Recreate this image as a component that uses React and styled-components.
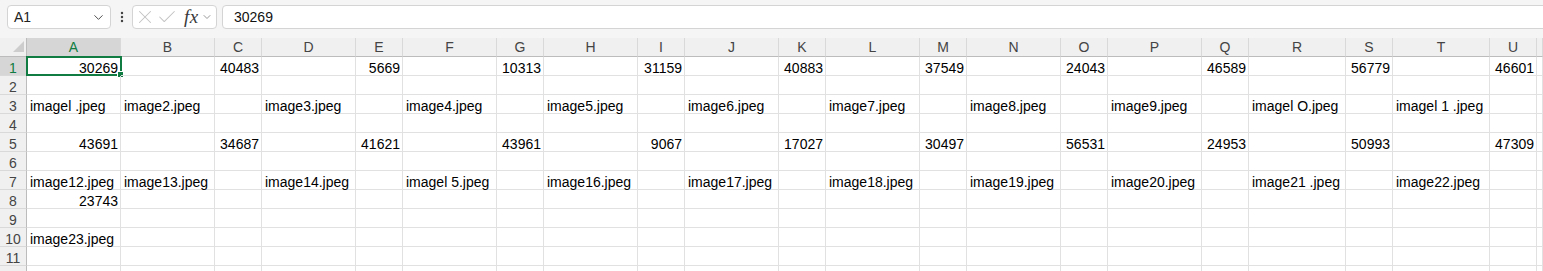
import React from "react";
import styled, { createGlobalStyle } from "styled-components";
import { ChevronDown, X, Check, EllipsisVertical } from "lucide-react";

const GlobalStyle = createGlobalStyle`
  html, body {
    margin: 0;
    padding: 0;
    background: #ffffff;
    overflow: hidden;
  }
  body {
    font-family: "Liberation Sans", Arial, sans-serif;
  }
`;

const COLS = [
  ["A", 94], ["B", 94], ["C", 47], ["D", 94], ["E", 47], ["F", 94], ["G", 47],
  ["H", 94], ["I", 47], ["J", 94], ["K", 47], ["L", 94], ["M", 47], ["N", 94],
  ["O", 47], ["P", 94], ["Q", 47], ["R", 97], ["S", 47], ["T", 97], ["U", 47],
];

const ROW_COUNT = 12;

const DATA = {
  1: { A: "30269", C: "40483", E: "5669", G: "10313", I: "31159", K: "40883", M: "37549", O: "24043", Q: "46589", S: "56779", U: "46601" },
  3: { A: "imagel .jpeg", B: "image2.jpeg", D: "image3.jpeg", F: "image4.jpeg", H: "image5.jpeg", J: "image6.jpeg", L: "image7.jpeg", N: "image8.jpeg", P: "image9.jpeg", R: "imagel O.jpeg", T: "imagel 1 .jpeg" },
  5: { A: "43691", C: "34687", E: "41621", G: "43961", I: "9067", K: "17027", M: "30497", O: "56531", Q: "24953", S: "50993", U: "47309" },
  7: { A: "image12.jpeg", B: "image13.jpeg", D: "image14.jpeg", F: "imagel 5.jpeg", H: "image16.jpeg", J: "image17.jpeg", L: "image18.jpeg", N: "image19.jpeg", P: "image20.jpeg", R: "image21 .jpeg", T: "image22.jpeg" },
  8: { A: "23743" },
  10: { A: "image23.jpeg" },
};

const Page = styled.div`
  width: 1543px;
  height: 271px;
  overflow: hidden;
  background: #ffffff;
`;

const FormulaBar = styled.div`
  display: flex;
  align-items: center;
  height: 38px;
  box-sizing: border-box;
  padding: 5px 0 9px 7px;
  background: #f5f5f5;
`;

const Box = styled.div`
  display: flex;
  align-items: center;
  height: 24px;
  box-sizing: border-box;
  background: #ffffff;
  border: 1px solid #d4d4d4;
  border-radius: 4px;
`;

const NameBox = styled(Box)`
  width: 104px;
  padding: 0 4px 0 6px;
  justify-content: space-between;
  font-size: 14px;
  color: #222;
`;

const Dots = styled.div`
  width: 21px;
  display: flex;
  justify-content: center;
  color: #444;
`;

const FxBox = styled(Box)`
  width: 85px;
  padding-left: 1px;
  color: #c2c2c2;
`;

const Fx = styled.span`
  font-family: "Liberation Serif", "Times New Roman", serif;
  font-style: italic;
  font-size: 19px;
  color: #3a3a3a;
  margin-left: 6px;
  letter-spacing: 0.5px;
`;

const FxChevron = styled.span`
  display: flex;
  color: #777;
  margin-left: 2px;
`;

const Input = styled(Box)`
  flex: 1;
  margin-left: 5px;
  margin-right: -8px;
  padding-left: 11px;
  font-size: 14px;
  color: #111;
`;

const Grid = styled.div`
  display: grid;
  grid-template-columns: 27px ${COLS.map(([, w]) => `${w}px`).join(" ")} 1fr;
  grid-template-rows: 19px repeat(${ROW_COUNT}, 19px);
  font-size: 14px;
`;

const Corner = styled.div`
  background: #f0f0f0;
  border-right: 1px solid #bcbcbc;
  border-bottom: 1px solid #bcbcbc;
  box-sizing: border-box;
  display: flex;
  align-items: flex-end;
  justify-content: flex-end;
  padding: 0 2px 4px 0;
`;

const ColHead = styled.div`
  box-sizing: border-box;
  background: ${(p) => (p.$active ? "#d6d6d6" : "#f0f0f0")};
  color: ${(p) => (p.$active ? "#107c41" : "#444")};
  border-right: 1px solid #d9d9d9;
  border-bottom: 1px solid ${(p) => (p.$active ? "#107c41" : "#bcbcbc")};
  text-align: center;
  line-height: 18px;
  font-size: 14px;
`;

const RowHead = styled.div`
  box-sizing: border-box;
  background: ${(p) => (p.$active ? "#d6d6d6" : "#f0f0f0")};
  color: ${(p) => (p.$active ? "#107c41" : "#444")};
  border-right: 1px solid ${(p) => (p.$active ? "#107c41" : "#bcbcbc")};
  border-bottom: 1px solid #d9d9d9;
  text-align: center;
  padding-top: 3px;
  line-height: 16px;
  font-size: 14px;
`;

const Cell = styled.div`
  position: relative;
  box-sizing: border-box;
  border-right: 1px solid #e1e1e1;
  border-bottom: 1px solid #e1e1e1;
  padding: 3px 2px 0 3px;
  line-height: 16px;
  white-space: nowrap;
  color: #000;
  text-align: ${(p) => (p.$num ? "right" : "left")};
`;

const Selection = styled.div`
  position: absolute;
  left: -1px;
  top: -1px;
  right: -2px;
  bottom: -1px;
  border: 2px solid #107c41;
  pointer-events: none;
`;

const Handle = styled.div`
  position: absolute;
  right: -4px;
  bottom: -4px;
  width: 5px;
  height: 5px;
  background: #107c41;
  border: 1px solid #ffffff;
`;

function Toolbar() {
  return (
    <FormulaBar>
      <NameBox>
        <span>A1</span>
        <ChevronDown size={15} strokeWidth={1.5} color="#444" />
      </NameBox>
      <Dots>
        <EllipsisVertical size={14} strokeWidth={2.2} />
      </Dots>
      <FxBox>
        <X size={22} strokeWidth={1.1} />
        <Check size={22} strokeWidth={1.1} />
        <Fx>fx</Fx>
        <FxChevron>
          <ChevronDown size={12} strokeWidth={1.5} />
        </FxChevron>
      </FxBox>
      <Input>30269</Input>
    </FormulaBar>
  );
}

function App() {
  const rows = Array.from({ length: ROW_COUNT }, (_, i) => i + 1);
  return (
    <Page>
      <GlobalStyle />
      <Toolbar />
      <Grid>
        <Corner>
          <svg width="11" height="11" viewBox="0 0 11 11">
            <polygon points="11,0 11,11 0,11" fill="#cdcdcd" />
          </svg>
        </Corner>
        {COLS.map(([c]) => (
          <ColHead key={c} $active={c === "A"}>{c}</ColHead>
        ))}
        <ColHead />
        {rows.map((r) => (
          <React.Fragment key={r}>
            <RowHead $active={r === 1}>{r}</RowHead>
            {COLS.map(([c]) => {
              const v = DATA[r] && DATA[r][c];
              const isA1 = r === 1 && c === "A";
              return (
                <Cell key={c} $num={v && /^\d+$/.test(v)}>
                  {v}
                  {isA1 && (
                    <Selection>
                      <Handle />
                    </Selection>
                  )}
                </Cell>
              );
            })}
            <Cell />
          </React.Fragment>
        ))}
      </Grid>
    </Page>
  );
}

export default App;
